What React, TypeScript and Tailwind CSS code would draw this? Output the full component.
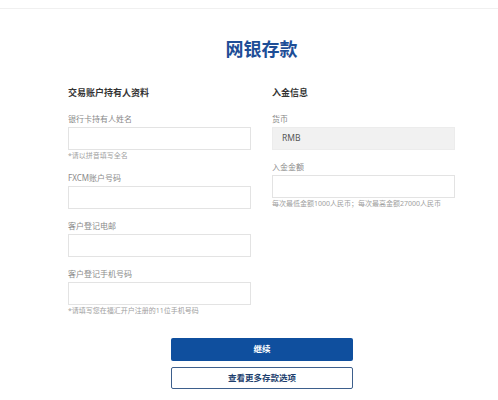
import React from "react";

interface FieldProps {
  label: string;
  hint?: string;
  value?: string;
  disabled?: boolean;
}

function Field({ label, hint, value, disabled }: FieldProps) {
  return (
    <div className="mb-3">
      <p className="mb-[3px] text-[8px] leading-[10px] text-[#8a8a8a]">{label}</p>
      <div
        className={
          disabled
            ? "flex h-[23px] items-center border border-[#ececec] bg-[#f1f1f1] px-[9px] text-[8.5px] text-[#555]"
            : "h-[23px] border border-[#e3e3e3] bg-white"
        }
      >
        {value}
      </div>
      {hint && (
        <p className="mt-[1px] text-[7px] leading-[10px] text-[#a0a0a0]">{hint}</p>
      )}
    </div>
  );
}

export default function App() {
  return (
    <div
      className="h-[400px] w-[498px] overflow-hidden bg-white"
      style={{ fontFamily: '"Noto Sans", "Noto Sans CJK SC", sans-serif' }}
    >
      {/* top bar edge */}
      <div className="h-[9px] border-b border-[#f0f0f0]" />

      <div className="ml-[68px] w-[387px]">
        <h1 className="mt-[28px] text-center text-[18px] font-bold leading-[24px] text-[#1e4e97]">
          网银存款
        </h1>

        <div className="mt-[27px] grid grid-cols-2 gap-x-[21px]">
          {/* account holder */}
          <div>
            <h2 className="mb-4 text-[9px] font-semibold leading-[10px] text-[#333]">
              交易账户持有人资料
            </h2>
            <Field label="银行卡持有人姓名" hint="*请以拼音填写全名" />
            <Field label="FXCM账户号码" />
            <Field label="客户登记电邮" />
            <Field label="客户登记手机号码" hint="*请填写您在福汇开户注册的11位手机号码" />
          </div>

          {/* deposit info */}
          <div>
            <h2 className="mb-4 text-[9px] font-semibold leading-[10px] text-[#333]">
              入金信息
            </h2>
            <Field label="货币" value="RMB" disabled />
            <Field label="入金金额" hint="每次最低金额1000人民币；每次最高金额27000人民币" />
          </div>
        </div>

        <div className="mt-[10px] flex flex-col items-center gap-[6px] pl-[1px]">
          <button className="h-[23px] w-[182px] rounded-[2px] bg-[#0f4f9e] text-[8.5px] font-bold text-white">
            继续
          </button>
          <button className="h-[22px] w-[182px] rounded-[2px] border border-[#3d5f8c] bg-white text-[8.5px] font-bold text-[#1e3f6e]">
            查看更多存款选项
          </button>
        </div>
      </div>
    </div>
  );
}
